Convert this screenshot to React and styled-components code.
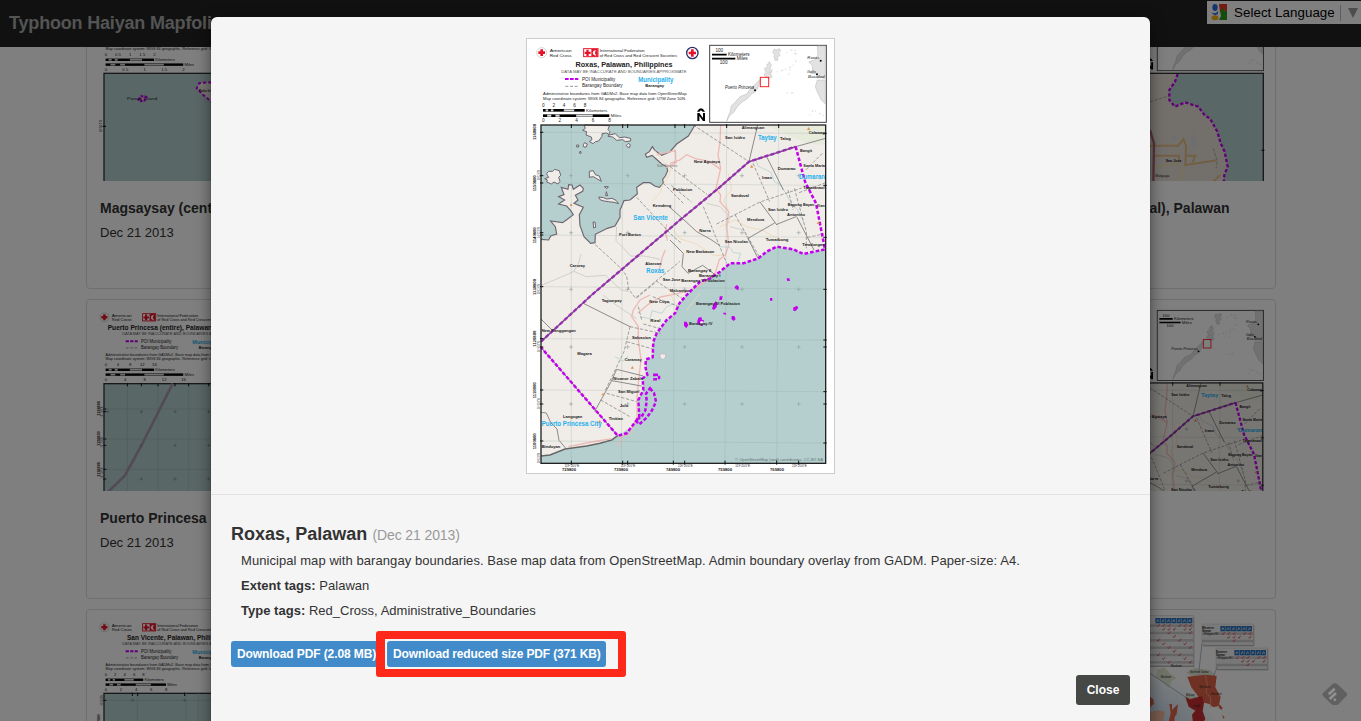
import React from "react";
import styled, { createGlobalStyle } from "styled-components";

const GlobalStyle = createGlobalStyle`
  * { box-sizing: border-box; }
  html, body { margin: 0; height: 721px; overflow: hidden; }
  body {
    background: #fff;
    color: #333;
    font: 13px/20px "Liberation Sans", Arial, sans-serif;
  }
`;

/* ---------- page ---------- */

const Page = styled.div`
  position: relative;
  height: 721px;
  overflow: hidden;
`;

const Navbar = styled.header`
  position: relative;
  z-index: 1;
  height: 47px;
  padding: 1px 0 0 9px;
  background: #222;
  display: flex;
  justify-content: space-between;
  align-items: flex-start;
`;

const Brand = styled.span`
  font-size: 18px;
  line-height: 44px;
  font-weight: bold;
  color: #a8a8a8;
  letter-spacing: -0.18px;
`;

const Translate = styled.div`
  width: 154px;
  height: 23px;
  padding-left: 3px;
  background: #fff;
  display: flex;
  align-items: center;
  color: #000;
  white-space: nowrap;
`;

const TranslateText = styled.span`
  margin-left: 5px;
  padding-right: 5px;
  border-right: 1px solid #bbb;
  font-size: 13.33px;
  line-height: 16px;
  letter-spacing: 0.05px;
`;

const Arrow = styled.svg`
  margin-left: 7px;
`;

const Gallery = styled.main`
  width: 1190px;
  margin: -58px 0 0 86px;
  display: flex;
  flex-direction: column;
  gap: 10px;
`;

const Row = styled.div`
  display: flex;
  justify-content: space-between;
`;

const Card = styled.article`
  width: 290px;
  height: 300px;
  padding: 4px;
  border: 1px solid #ddd;
  border-radius: 4px;
  background: #fff;
`;

const Thumb = styled.svg`
  display: block;
  width: 280px;
  height: 187px;
`;

const Caption = styled.div`
  padding: 17px 0 0 9px;
  white-space: nowrap;
`;

const CardTitle = styled.h3`
  margin: 0 0 5px;
  font-size: 14px;
  line-height: 20px;
`;

const CardDate = styled.p`
  margin: 0;
`;

const Backdrop = styled.div`
  position: absolute;
  inset: 0;
  z-index: 2;
  background: rgba(0, 0, 0, 0.5);
`;

const FeedBadge = styled.svg`
  position: absolute;
  right: 13px;
  bottom: 16px;
  z-index: 3;
`;

/* ---------- dialog ---------- */

const Dialog = styled.section`
  position: absolute;
  z-index: 3;
  top: 17px;
  left: 211px;
  width: 939px;
  height: 760px;
  border-radius: 6px;
  background: #f5f5f5;
  box-shadow: 0 5px 15px rgba(0, 0, 0, 0.5), 0 0 1px rgba(0, 0, 0, 0.6);
`;

const Preview = styled.div`
  height: 478px;
  padding-top: 20.5px;
  border-bottom: 1px solid #e2e2e2;
  display: flex;
  justify-content: center;
  align-items: flex-start;
`;

const MapImage = styled.svg`
  width: 309px;
  height: 436px;
  border: 1px solid #ccc;
  background: #fff;
`;

const Details = styled.div`
  padding: 28px 20px 0;
`;

const Heading = styled.h2`
  margin: 0 0 5px;
  font-size: 18px;
  line-height: 22px;
  letter-spacing: 0.02px;
`;

const HeadingDate = styled.small`
  font-size: 14px;
  font-weight: normal;
  letter-spacing: -0.1px;
  color: #999;
`;

const Line = styled.p`
  margin: 0 0 5px 10px;
  letter-spacing: ${(p) => p.$track || "0.02px"};
`;

const Actions = styled.div`
  position: relative;
  display: flex;
  gap: 5px;
  margin-top: 20px;
`;

const Button = styled.button`
  width: ${(p) => p.$width}px;
  height: ${(p) => p.$height || 26}px;
  padding: 0 6px;
  border: 0;
  border-radius: 3px;
  background: ${(p) => (p.$dark ? "#464846" : "#428bca")};
  color: #fff;
  font: bold 12px/18px "Liberation Sans", Arial, sans-serif;
  letter-spacing: ${(p) => p.$track || "0"};
  text-align: ${(p) => (p.$dark ? "center" : "left")};
  white-space: nowrap;
`;

const Highlight = styled.div`
  position: absolute;
  left: 145px;
  top: -10px;
  width: 250px;
  height: 46px;
  border: 8px solid #ff291b;
  border-left-width: 9px;
  border-right-width: 8px;
  border-radius: 3px;
`;

const Footer = styled.footer`
  display: flex;
  justify-content: flex-end;
  padding: 8px 20px 0;
`;

/* ---------- map drawing helpers ---------- */

const SEA = "#b5cfce";
const LAND = "#f0ece7";
const PURPLE = "#c400f0";
const CYAN = "#1fb0ee";

const MapText = styled.text`
  font-family: "Liberation Sans", Arial, sans-serif;
`;

function T({ x, y, s = 12, w, b, fill = "#222", mid, italic, rotate, children }) {
  return (
    <MapText
      x={x}
      y={y}
      fontSize={s}
      fontWeight={b ? "bold" : "normal"}
      fontStyle={italic ? "italic" : "normal"}
      fill={fill}
      textAnchor={mid ? "middle" : "start"}
      textLength={w}
      lengthAdjust="spacingAndGlyphs"
      transform={rotate ? `rotate(${rotate} ${x} ${y})` : undefined}
    >
      {children}
    </MapText>
  );
}

function ScaleBar({ x, y, w, unit, unitWidth }) {
  const q = w / 4;
  return (
    <g>
      <rect x={x} y={y} width={w} height="8" fill="#000" />
      <rect x={x + q / 4} y={y + 1} width={q / 4} height="6" fill="#ddd" />
      <rect x={x + q * 0.75} y={y + 1} width={q / 4} height="6" fill="#ddd" />
      <rect x={x + 2 * q} y={y + 1} width={q} height="6" fill="#ddd" />
      <T x={x + w + 4} y={y + 9} s={13} w={unitWidth}>{unit}</T>
    </g>
  );
}

function Header({ title, titleWidth, ticks = [0, 2, 4, 6, 8], km = 125, miles = 199, box = [733, 156], place = true }) {
  return (
    <g>
      <circle cx="65" cy="68" r="15" fill="#fff" stroke="#aaa" strokeWidth="1.5" />
      <path d="M61 58h8v6h6v8h-6v6h-8v-6h-6v-8h6z" fill="#e8132b" />
      <T x={89} y={67} s={13} w={66}>American</T>
      <T x={89} y={80} s={13} w={66}>Red Cross</T>
      <rect x="191" y="56" width="43" height="24" fill="#fff" stroke="#e8132b" strokeWidth="3" />
      <path d="M199 59h7v6h6v7h-6v6h-7v-6h-5v-7h5z" fill="#e8132b" />
      <path d="M214 57h19v22h-19z" fill="#e8132b" />
      <path d="M229 61a8 8 0 1 0 0 15a9 9 0 0 1 0-15z" fill="#fff" />
      <T x={239} y={66} s={13} w={135}>International Federation</T>
      <T x={239} y={80} s={13} w={232}>of Red Cross and Red Crescent Societies</T>
      <circle cx="517" cy="69" r="17" fill="#fff" stroke="#28306c" strokeWidth="4" />
      <path d="M513 58h8v7h7v8h-7v7h-8v-7h-7v-8h7z" fill="#e8132b" />
      <T x={312} y={110} s={23} w={titleWidth} b mid>{title}</T>
      <T x={124} y={128} s={12} w={376} fill="#555">DATA MAY BE INACCURATE AND BOUNDARIES APPROXIMATE</T>
      <path d="M135 147h40" stroke={PURPLE} strokeWidth="6" strokeDasharray="11 4" />
      <T x={186} y={152} s={15} w={100}>POI Municipality</T>
      <T x={355} y={155} s={20} w={105} b fill={CYAN}>Municipality</T>
      <path d="M136 169h38" stroke="#666" strokeWidth="2" strokeDasharray="9 5" />
      <T x={186} y={172} s={15} w={122}>Barangay Boundary</T>
      <T x={376} y={172} s={13} w={56} b>Barangay</T>
      <T x={69} y={194} s={13} w={434}>Administrative boundaries from GADMv2. Base map data from OpenStreetMap.</T>
      <T x={69} y={209} s={13} w={429}>Map coordinate system: WGS 84 geographic. Reference grid: UTM Zone 50N.</T>
      {ticks.map((t, i) => (
        <g key={i}>
          <T x={70 + (km / 4) * i} y={230} s={14} mid>{t}</T>
          <T x={70 + (miles / 4) * i} y={277} s={14} mid>{t}</T>
        </g>
      ))}
      <ScaleBar x={69} y={237} w={km} unit="Kilometers" unitWidth={64} />
      <ScaleBar x={69} y={253} w={miles} unit="Miles" unitWidth={32} />
      <path d="M531 245q12-20 24 0l-7 0-5-4-5 4z" fill="#000" />
      <path d="M532 249h6l11 15v-15h6v24h-6l-11-15v15h-6z" fill="#000" />
      <rect x="569" y="46" width="350" height="231" fill="#fff" stroke="#444" strokeWidth="3" />
      <g fill="#e2e2e2" stroke="#b4b4b4" strokeWidth="1.5">
        <path d="M722 146l-6 22-8 16-14 8-12 14-16 10-14 14-10 16-14 12-8 16 4-14 6-14 4-18 14-14 12-14 20-8 10-14 14-14z" />
        <path d="M748 95l6 10-4 10 6 8-4 8 4 10-8 4-8-2-8-8 6-8-4-10 8-8 2-8z" />
        <path d="M762 58l8 2 8-4 4 6-6 6 4 8-8 6 2 8-8 2-4-12 2-6-6-6z" />
        <path d="M892 48l24 0v98l-14-4-10 2-2-12-18-2 6-10-2-14-10-10 10-4 8-2 10-16zM892 150l24 0v72l-12-12-12-24-6-16z" />
      </g>
      <g fill="none" stroke="#c4c4c4" strokeWidth="2" strokeDasharray="4 9 7 6">
        <path d="M770 126l28-8 22-12 12-20M800 68l12-8 18 2-8 12 14-4M760 116l-16 14M800 190l26-2M868 256l12-16 32 18M732 116l10-14M806 134l4-16" />
      </g>
      <path d="M576 74h44M576 86h70" stroke="#000" strokeWidth="5" />
      <T x={598} y={67} s={14} mid>100</T>
      <T x={624} y={78} s={14} w={65}>Kilometers</T>
      <T x={650} y={91} s={14} w={33}>Miles</T>
      <T x={611} y={101} s={14} mid>100</T>
      {place && <rect x={box[0] - 12} y={box[1] - 14} width="25" height="28" fill="none" stroke="#f22" strokeWidth="3" />}
      <T x={615} y={176} s={14} w={87} italic>Puerto Princesa</T>
      <circle cx="705" cy="181" r="3" />
      <T x={862} y={87} s={13} w={36} italic>Roxas</T>
      <circle cx="902" cy="92" r="3" />
      <T x={862} y={130} s={13} w={25} italic>Iloilo</T>
      <T x={864} y={144} s={13} w={50} italic>Bacolod</T>
      <circle cx="891" cy="133" r="3" />
    </g>
  );
}

const coast =
  "M525 15L505 48 470 72 450 95 425 106 405 92 397 80 388 95 376 103 380 112 396 106 412 120 425 132 440 140 443 152 436 168 428 178 430 190 418 202 404 198 390 188 370 188 350 202 352 222 330 240 312 242 300 270 300 292 285 318 262 325 226 343 225 368 212 370 192 350 180 316 178 284 190 262 162 250 174 240 166 226 188 214 190 205 180 195 160 208 156 195 146 194 144 208 124 202 132 224 116 230 134 240 116 252 140 258 152 272 160 284 142 298 128 308 92 303 106 320 110 342 92 348 86 360 63 358";

const southCoast =
  "L63 1008 90 1005 135 987 200 978 240 970 275 960 293 947 335 922 355 885 354 840 370 810 368 775 378 765 378 718 398 712 400 665 410 640 440 600 465 580 478 550 500 525 540 485 570 475 600 455 630 430 670 430 715 415 740 395 770 380 820 388 850 402 917 388V15z";

const labels = [
  ["San Vicente", 340, 299, 104, 1], ["Roxas", 379, 460, 54, 1], ["Taytay", 714, 61, 56, 1],
  ["Dumaran", 837, 177, 78, 1], ["Puerto Princesa City", 65, 919, 180, 1],
  ["San Vicente", 410, 141, 62, 2], ["Kemdeng", 398, 260, 56], ["Port Barton", 297, 347, 66],
  ["Caruray", 149, 442, 46], ["Abaroan", 376, 435, 48], ["San Jose", 428, 482, 54],
  ["Malcampo", 450, 516, 58], ["Poblacion", 459, 212, 58], ["New Agutaya", 522, 130, 78],
  ["San Isidro", 615, 57, 60], ["Alimanguan", 665, 28, 68], ["Talog", 780, 61, 32],
  ["Calawag", 866, 42, 48], ["Bangit", 840, 96, 36], ["Santa Maria", 850, 141, 65],
  ["Dumarao", 773, 151, 54], ["Iraan", 726, 176, 30], ["Tagatanaol", 850, 208, 64],
  ["Sandoval", 633, 230, 54], ["Bagong Bayan", 803, 257, 80], ["Ilian", 892, 260, 22],
  ["San Isidro", 744, 272, 60], ["Antonino", 801, 289, 54], ["Mendoza", 681, 304, 52],
  ["Narra", 538, 335, 34], ["San Nicolas", 614, 370, 70], ["Tumarbong", 737, 362, 68],
  ["Taradungan", 847, 377, 66], ["New Barbacan", 499, 398, 84], ["Barangay II", 504, 455, 70],
  ["Barangay I", 537, 471, 64], ["Barangay V Poblacion", 484, 487, 130],
  ["Tagumpay", 245, 545, 60], ["New Cuyo", 388, 548, 60], ["Rizal", 391, 605, 30],
  ["New Panggangan", 65, 637, 102], ["Salvacion", 336, 657, 57], ["Magara", 172, 706, 43],
  ["Caramay", 314, 722, 51], ["Nicanor Zabala", 280, 779, 89], ["San Miguel", 294, 818, 64],
  ["Jolo", 299, 861, 26], ["Langogan", 129, 893, 58], ["Tinitian", 266, 901, 43],
  ["Binduyan", 65, 983, 56], ["Barangay VI Poblacion", 528, 555, 132], ["Barangay IV", 507, 614, 70],
];

function RoxasMap() {
  return (
    <g>
      <g transform="translate(0 -270)">
        <Header title="Roxas, Palawan, Philippines" titleWidth={291} />
      </g>
      <rect x="63" y="15" width="854" height="1015" fill={SEA} />
      <path d={coast + southCoast} fill={LAND} />
      <path d="M740 17h175v60l-60-10-60-26z" fill="#e6ebdc" />
      <path d={coast} fill="none" stroke="#6d6670" strokeWidth="3.5" />
      <path d="M63 1008L90 1005 135 987 200 978 240 970 275 960 293 947" fill="none" stroke="#666" strokeWidth="4.5" />
      <g fill={LAND} stroke="#6d6670" strokeWidth="3">
        <path d="M192 15l4 10-8 6 12 4-2 10 16 6 2 8-8 6 12 6 6-6 10-2 10-14 0-8 14-2 8 6 18-4 12 12 16-2 18 4 0 8-16 2-8-6-18 2-12-10-14-2 6-14-6-6 4-12z" />
        <path d="M80 160l6-6 12 0 6-6 14 4 4 14-6 6 4 12-6 8-12-6-8 6-14-6 2-6-8-4 12-4-4-6z" />
        <path d="M208 154l12-2 6 12 12 4 6 16-14-8-10-6-12 2z" />
        <path d="M236 231l14 2 10 4 16-2 12 6 8 10-14-4-16-2-14-2-12-4z" />
        <path d="M259 215l4 12h-6zM219 306l6 0 2 16-6 2zM253 200h12l-4 6zM190 74l4-6 8 4-4 10-8-2zM170 75h6v6h-6zM179 95h4v5h-4zM319 76l6-6 6 4-2 8h-6z" />
      </g>
      <g fill="none" stroke="#eebab6" strokeWidth="4">
        <path d="M602 15l-2 50-6 40 8 40-14 60 14 20-2 20 26 30-6 40 6 60-10 30-18 14-12 40-30 26-40 24-44 12-50 10-40 24-28 24M450 130l30-10 20-16 26 12 42 8 34 24M390 525l-30 15-20 30-5 20 20 30 0 40 8 60-6 50-6 60 0 60-20 50-26 10-10 28M440 312l-4 24 6 26M436 390l-8 18-10 40M410 104l56-12 2 36-30 14M275 956l-60 10-70 14" />
      </g>
      <g fill="none" stroke="#efd9b4" strokeWidth="2.5">
        <path d="M404 92l28 34 20 24-12 30-14 16-4 20-24 26M625 160l10 50-24 30 14 30M600 320l45-20 40 22 40 8 60 32M460 330l20 26 50 16 50 34 30 0M450 520l20 40-10 30M540 520l-40 50" />
      </g>
      <g fill="none" stroke="#b7d3d3" strokeWidth="2.5">
        <path d="M708 120l6 18 16 8 22 10 12 30 18 8 14 24 20 36 16 14 20 40M600 380l30 2 10 16 22 2-10 30M360 590l30 6 6-24 30 8 14-20 24-10M285 710l25 14 14-16M290 960l30-30 40-10" />
      </g>
      <g fill="none" stroke="#c4c0ba" strokeWidth="2">
        <path d="M183 402l-8 30-14 22 38 16 58-4 46 44 20 4M63 496l40-16 60-26M290 320l-2 42 24 24 20 22 40 0 50 10M250 526l40 30 60 40M560 250l40 10 30 30-10 30M630 320l40 10 20 40" />
      </g>
      <g fill="none" stroke="#777" strokeWidth="2" strokeDasharray="10 5">
        <path d="M226 374l76 70 18 24 6 40 20 26 134-110M350 232l104 112 28 24M454 196l60 50M430 190l60 60M350 534l60-50 80 54M450 140l112 84M520 15l167 110M699 130l50 115M590 312l130-66 125-42M550 260l70 170M645 284l75 130M823 205l36 130 0 50M804 210l16 60M907 100l-50 50M917 188l-80 30M478 560l-80-30M370 612l55 15M330 620l92 20M320 665l80 22M330 620l-18 75-58 120M260 820l90 25M242 840l88 50M355 560l10 40M862 352l50-10" />
      </g>
      <g fill="none" stroke="#777" strokeWidth="2.5">
        <path d="M713 15l-26 110M827 80l90-25M740 110l50 100M720 246l50 68M768 314l60-24M684 355l80-46M684 355l30 60M830 290l52 100M450 262l50 45 30 28 40 22 30 20M190 550l140 70M290 748l80 20M275 782l90 16M290 748l-16 36-50 90M63 597l36 36M63 877l16 2 14 30 18 18 6 34 22 26M450 360l40 40-4 40 18 20 44-24 40 30" />
      </g>
      <g stroke="#879c9b" strokeWidth="1" opacity=".65">
        <path d="M154 15v1015M308 15l-4 1015M465 15l-5 1015M620 15l-5 1015M776 15l-6 1015M63 37l854 3M63 189l854 7M63 345l854 7M63 500l854 7M63 656l854 4M63 810l854 5M63 963l854 6" fill="none" />
      </g>
      <g stroke="#8ca09d" strokeWidth="1.7">
        {[153, 323, 494, 666, 836].flatMap((x) =>
          [167, 338, 508, 681, 852].map((y) => <path key={`${x}-${y}`} d={`M${x - 6} ${y}h12M${x} ${y - 6}v12`} />)
        )}
      </g>
      <path d="M63 665L215 525 480 300 595 205 687 125 827 80" fill="none" stroke="#76517f" strokeWidth="4.5" />
      <path d="M63 682L293 947" fill="none" stroke="#76517f" strokeWidth="3" />
      <path d="M63 665L215 525 480 300 595 205 687 125 827 80" fill="none" stroke="#9c2bb8" strokeWidth="7" strokeDasharray="12 7" />
      <g fill="none" stroke={PURPLE} strokeWidth="7.5" strokeDasharray="11 6">
        <path d="M827 80L855 185 888 250 915 388 850 402 820 388 770 380 740 395 715 415 670 430 630 430 600 455 570 475 540 485 500 525 478 550 465 580 440 600 410 640 400 665 398 712 378 718 376 740 382 765 368 775 370 810 355 840 358 890 335 920 320 940 293 947L63 682" />
        <path d="M390 805l12 14 6 26-12 26-16 22-22 20-12-12 18-10 12-20 4-28-2-22z" />
        <path d="M403 764h14v14h-14z" />
      </g>
      <g fill={PURPLE}>
        <path d="M643 501l8-6 6 6-2 10-8-4zM800 475l8 0 2 8-9-1zM750 534h7v8h-7zM819 563l12-6 4 6-8 10-7-1zM609 578l8 0 2 6-8-1zM635 588l8 0 4 9-6 6-7-6zM599 529l9 0-2 10-8 2zM580 554l6-10 6 4-2 14-8 8-6-4zM492 605l8 0 5 10-6 10-7-8zM535 593l9-2 2 8 6 2-5 16-10-2-6-8z" />
      </g>
      <circle cx="545" cy="608" r="5" fill="#eee" />
      <path d="M420 706l4-5 14 2-2 10-8 6-8-8z" fill={LAND} stroke="#c3a7c9" strokeWidth="2" />
      <g fill="#df9552">
        <path d="M149 258l4-8 5 8zM690 143l5-9 5 9zM861 30l5-9 5 9zM332 746l5-8 5 8zM244 826l5-8 5 8zM890 312l5-8 5 8zM234 908l5-8 5 8z" />
      </g>
      {labels.map(([text, x, y, w, kind]) => (
        <T key={text + x} x={x} y={y} w={w} s={kind === 1 ? 20 : 13} b={kind !== 2} fill={kind === 1 ? CYAN : kind === 2 ? "#777" : "#1a1a1a"}>
          {text}
        </T>
      ))}
      <T x={645} y={1022} s={13} w={264} fill="#5f7272">© OpenStreetMap (and) contributors, CC-BY-SA</T>
      <rect x="63" y="15" width="854" height="1015" fill="none" stroke="#222" strokeWidth="4" />
      <path d="M154 12v12M308 12v12M323 12v12M465 12v12M494 12v12M620 12v12M776 12v12M154 1022v12M308 1022v12M323 1022v12M460 1022v12M494 1022v12M615 1022v12M770 1022v12M836 1022v12M60 37h10M60 167h10M60 189h10M60 338h10M60 345h10M60 500h10M60 656h10M60 681h10M60 810h10M60 852h10M60 963h10M910 40h10M910 196h10M910 352h10M910 508h10M910 660h10M910 681h10M910 815h10M910 852h10M910 969h10" stroke="#111" strokeWidth="3" />
      {[[60, 1160800], [214, 1150800], [370, 1140800], [525, 1130800], [680, 1120800], [835, 1110800], [988, 1100800]].map(([y, n]) => (
        <T key={n} x={49} y={y} s={13} w={48} b rotate={-90}>{n}</T>
      ))}
      {[181, 353, 523, 696, 867, 1030].map((y) => (
        <T key={y} x={59} y={y} s={10} w={32} rotate={-90}>10°15'0"N</T>
      ))}
      {[[126, 729800], [282, 739800], [438, 749800], [594, 759800], [750, 769800]].map(([x, n], i) => (
        <g key={n}>
          <T x={x} y={1053} s={13} w={42} b>{n}</T>
          <T x={[134, 302, 474, 646, 816][i]} y={1042} s={10} w={44}>119°20'0"E</T>
        </g>
      ))}
    </g>
  );
}

function MagsaysayThumb() {
  return (
    <Thumb viewBox="273 -18 840 561">
      <g transform="translate(254 -40) scale(.91)">
        <Header title="Magsaysay (central), Palawan" titleWidth={320} ticks={[0, 0.5, 1, 1.5, 2]} km={160} miles={256} />
      </g>
      <rect x="312" y="220" width="775" height="400" fill={SEA} stroke="#333" strokeWidth="4" />
      <path d="M640 310l-30-25-20-20 8-16 30-2 40 6" fill={LAND} stroke={PURPLE} strokeWidth="6" strokeDasharray="10 6" />
      <path d="M416 299l8-10 14 2-4 10-10 2z" fill={LAND} stroke={PURPLE} strokeWidth="7" strokeDasharray="8 3" />
      <T x={381} y={300} s={10} w={90}>Panag Island</T>
      <T x={596} y={275} s={11} b>Pulo Island</T>
      <path d="M308 379h10" stroke="#000" strokeWidth="3" />
      <T x={306} y={397} s={10} w={38} rotate={-90}>10°50'0"N</T>
    </Thumb>
  );
}

function PrincesaThumb() {
  return (
    <Thumb viewBox="273 42 840 561">
      <g transform="translate(254 20) scale(.91)">
        <Header title="Puerto Princesa (entire), Palawan, Philippines" titleWidth={472} ticks={[0, 4, 8, 12, 16]} km={160} miles={256} />
      </g>
      <rect x="312" y="281" width="775" height="400" fill={SEA} stroke="#333" strokeWidth="4" />
      <path d="M382 281v330M474 281v330M566 281v330M312 357h400M312 447h400M312 538h400" stroke="#9db6b5" strokeWidth="2" />
      <path d="M518 281L425 465 375 556 325 605" fill="none" stroke="#a596aa" strokeWidth="8" />
      <path d="M318 365h10m-5-5v10M419 365h10m-5-5v10M520 365h10m-5-5v10M621 365h10m-5-5v10M419 466h10m-5-5v10M520 466h10m-5-5v10M621 466h10m-5-5v10M419 567h10m-5-5v10M520 567h10m-5-5v10M621 567h10m-5-5v10" stroke="#829795" strokeWidth="2.5" />
      <path d="M382 279v10M424 279v10M474 279v10M525 279v10M566 279v10M626 279v10M310 357h9M310 365h9M310 447h9M310 466h9M310 538h9M310 567h9" stroke="#111" strokeWidth="3" />
      {[[377, "1138800"], [468, "1128800"], [560, "1118800"]].map(([y, n]) => (
        <g key={n}>
          <T x={299} y={y} s={12} w={44} b rotate={-90}>{n}</T>
          <T x={308} y={y + 6} s={10} w={34} rotate={-90}>10°15'0"N</T>
        </g>
      ))}
    </Thumb>
  );
}

function SanVicenteThumb() {
  return (
    <Thumb viewBox="273 972 840 561">
      <g transform="translate(254 950) scale(.91)">
        <Header title="San Vicente, Palawan, Philippines" titleWidth={345} km={124} miles={199} />
      </g>
      <rect x="312" y="1210" width="775" height="400" fill={SEA} stroke="#333" strokeWidth="4" />
      <path d="M412 1210v100M558 1210v100M595 1210v100M312 1231h400" stroke="#9db6b5" strokeWidth="2" />
      <path d="M392 1231h12m-6-5v10M548 1231h12m-6-5v10" stroke="#829795" strokeWidth="2.5" />
      <path d="M397 1208v10M413 1208v10M554 1208v10M310 1231h9" stroke="#111" strokeWidth="3" />
      <T x={308} y={1248} s={10} w={34} rotate={-90}>10°45'0"N</T>
      <T x={299} y={1305} s={12} w={32} b rotate={-90}>1170800</T>
    </Thumb>
  );
}

function PrincesaCityThumb() {
  return (
    <Thumb viewBox="-417 -18 840 561">
      <g transform="translate(-436 -40) scale(.91)">
        <Header title="Puerto Princesa (central), Palawan" titleWidth={380} place={false} />
      </g>
      <rect x="-378" y="220" width="778" height="400" fill={SEA} />
      <path d="M-378 220H143L135 245 118 270 118 300 135 320 165 307 205 320 225 347 240 355 262 395 272 430 284 455 293 500 283 525 276 620H-378z" fill="#e6e0d8" />
      <path d="M250 445l12 40-4 20M60 305l60-18" fill="none" stroke="#888" strokeWidth="2" strokeDasharray="9 5" />
      <path d="M60 437h85l15-20 8 20-2 58 94-14M75 467h72v20M166 467h30l-8 20M250 545l20-20" fill="none" stroke="#e5bd85" strokeWidth="6" />
      <path d="M60 390l12 40-2 115" fill="none" stroke="#b06a78" strokeWidth="7" />
      <path d="M162 500l-16 44M80 500l70-10" fill="none" stroke="#eee4a0" strokeWidth="4" />
      <path d="M190 380l14 60-24 0zM125 400l20 20-20 2z" fill="#dcdce0" />
      <path d="M143 222L135 245 118 270 118 300 135 320 165 307 205 320 225 347 240 355 262 395 272 430 284 455 293 500 283 525 276 620" fill="none" stroke={PURPLE} strokeWidth="7" strokeDasharray="10 6" />
      <T x={107} y={487} s={12} w={48} b>San Jose</T>
      <T x={76} y={532} s={9} w={42}>Matiyaga</T>
      <rect x="-378" y="220" width="778" height="400" fill="none" stroke="#333" strokeWidth="4" />
      <path d="M395 451h8" stroke="#111" strokeWidth="4" />
    </Thumb>
  );
}

function Table({ x, y, w, rows, cols, title, left = 0 }) {
  const top = title ? y - 6 : y - 8;
  return (
    <g>
      <rect x={x + 3} y={top + 4} width={w} height={30 + rows * 11} fill="#bbb" />
      <rect x={x} y={top} width={w} height={30 + rows * 11} fill="#f4f4f4" stroke="#ccc" strokeWidth="1.5" />
      {Array.from({ length: rows }, (_, r) => (
        <g key={r}>
          <rect x={x} y={y + 19 + r * 11} width={w} height="8" fill={r % 2 ? "#eee" : "#cbcbcb"} />
          {Array.from({ length: cols }, (_, c) =>
            (r * 3 + c * 5) % 4 < (r < 2 ? 3 : 1) ? (
              <path key={c} d={`M${x + left + 5 + c * 16} ${y + 22 + r * 11}l3 4 5-8`} fill="none" stroke="#e34b55" strokeWidth="2.5" />
            ) : null
          )}
        </g>
      ))}
      {Array.from({ length: cols }, (_, c) => (
        <g key={c}>
          <rect x={x + left + c * 16} y={y} width="15" height="16" fill="#2f75bd" />
          <path d={`M${x + left + c * 16 + 4} ${y + 12}l4-7 3 6`} fill="none" stroke="#fff" strokeWidth="2" />
        </g>
      ))}
      {title && (
        <>
          <T x={x} y={y + 8} s={9} b>{title}</T>
          <T x={x} y={y + 17} s={9} b>Samar</T>
          <T x={x + 6} y={y + 27} s={8} w={44}>Philippine RC</T>
        </>
      )}
    </g>
  );
}

function ResponseThumb() {
  return (
    <Thumb viewBox="-417 942 840 561">
      <defs>
        <radialGradient id="water" cx="30%" cy="72%" r="62%">
          <stop offset="0" stopColor="#a9c8e4" />
          <stop offset=".6" stopColor="#c2d7e9" />
          <stop offset="1" stopColor="#fff" />
        </radialGradient>
      </defs>
      <rect x="-417" y="942" width="840" height="561" fill="#fff" />
      <rect x="-300" y="1040" width="650" height="463" fill="url(#water)" />
      <g fill="#e1e6d0">
        <path d="M82 1110l20-8 20 20 18 12-16 10-8 20-20-20-18-12zM168 1118l26-14 46 6 18 18-40 6-30-6zM165 1190l25-8 12 12-8 20-26-8z" />
      </g>
      <g fill="#df6247">
        <path d="M172 1130l54-6 34 4-4 34 16 30-6 26-16 4-12-10-24-6-12-20-18-24zM268 1212l10 12-4 6-8-8zM276 1244l8 8-4 4z" />
        <path d="M60 1190l10 8 2 14-12 10zM118 1212l8 0 0 18 18-18-4 30-6 8-2 30h-20l10-40z" />
      </g>
      <path d="M166 1190l14 8 36-10 6 20-4 26 8 22-10 20H190l-4-32 10-12-20-12z" fill="#c62f32" />
      <path d="M60 1240q20-16 44-4l-8 44H60z" fill="#efb59b" />
      <path d="M226 1124l6 30-4 24 14 16 0 30" fill="none" stroke="#f0b5a1" strokeWidth="2" />
      <Table x={-20} y={954} w={210} left={96} rows={11} cols={7} />
      <Table x={216} y={978} w={154} left={55} rows={3} cols={6} title="Western" />
      <Table x={258} y={1050} w={154} left={55} rows={3} cols={6} title="Eastern" />
      <g fill="none" stroke="#789bb7" strokeWidth="2">
        <path d="M216 1030l-10 90M262 1100l-12 30M60 1120l110 74" />
      </g>
      <T x={180} y={1120} s={9} w={56}>Northern Samar</T>
      <T x={122} y={1101} s={9} w={34}>Masbate</T>
      <T x={92} y={1134} s={9} w={32}>Masbate</T>
      <T x={208} y={1163} s={9}>Western</T>
      <T x={244} y={1184} s={9}>Eastern</T>
      <T x={168} y={1188} s={9}>Biliran</T>
      <T x={190} y={1222} s={9}>Leyte</T>
    </Thumb>
  );
}

function MapCard({ thumb, title, date }) {
  return (
    <Card>
      {thumb}
      {title && (
        <Caption>
          <CardTitle>{title}</CardTitle>
          <CardDate>{date}</CardDate>
        </Caption>
      )}
    </Card>
  );
}

export default function App() {
  return (
    <Page>
      <GlobalStyle />
      <Navbar>
        <Brand>Typhoon Haiyan Mapfolio</Brand>
        <Translate>
          <svg width="19" height="19" viewBox="0 0 19 19">
            <rect width="19" height="19" fill="#fff" />
            <path d="M9 1h8v8l-4-2-3 2z" fill="#e63524" />
            <path d="M10 8l4-3v3h3v9h-8l2-4z" fill="#29961f" />
            <ellipse cx="5" cy="4.5" rx="2.6" ry="3.4" fill="#2868d8" />
            <path d="M1 9q4 3 7-1v3q-4 3-7-2z" fill="#3473dc" />
            <ellipse cx="5" cy="14.8" rx="3.6" ry="2.5" fill="#f2b218" />
          </svg>
          <TranslateText>Select Language</TranslateText>
          <Arrow width="10" height="10" viewBox="0 0 10 10">
            <path d="M0 0h10L5 10z" fill="#9b9b9b" />
          </Arrow>
        </Translate>
      </Navbar>
      <Gallery>
        <Row>
          <MapCard thumb={<MagsaysayThumb />} title="Magsaysay (central), Palawan" date="Dec 21 2013" />
          <MapCard thumb={<PrincesaCityThumb />} title="Puerto Princesa (central), Palawan" date="Dec 21 2013" />
        </Row>
        <Row>
          <MapCard thumb={<PrincesaThumb />} title="Puerto Princesa (entire), Palawan" date="Dec 21 2013" />
          <MapCard
            thumb={<Thumb viewBox="21 -245 923 616" preserveAspectRatio="none"><RoxasMap /></Thumb>}
            title="Roxas, Palawan"
            date="Dec 21 2013"
          />
        </Row>
        <Row>
          <MapCard thumb={<SanVicenteThumb />} />
          <MapCard thumb={<ResponseThumb />} />
        </Row>
      </Gallery>
      <Backdrop />
      <FeedBadge width="26" height="22" viewBox="0 0 78 66">
        <path d="M32 3q7-5 14 0l27 26q5 5 0 10L49 64q-2 2-5 2H34q-3 0-5-2L4 40q-5-5 0-11z" fill="#606060" />
        <path d="M20 34L38 17M23 48L42 30M36 53l5-5" stroke="#909090" strokeWidth="8" fill="none" />
      </FeedBadge>
      <Dialog>
        <Preview>
          <MapImage viewBox="21 -243 921 1302" preserveAspectRatio="none">
            <RoxasMap />
          </MapImage>
        </Preview>
        <Details>
          <Heading>
            Roxas, Palawan <HeadingDate>(Dec 21 2013)</HeadingDate>
          </Heading>
          <Line $track="0.07px">
            Municipal map with barangay boundaries. Base map data from OpenStreetMap. Admin boundary overlay from GADM. Paper-size: A4.
          </Line>
          <Line><b>Extent tags:</b> Palawan</Line>
          <Line><b>Type tags:</b> Red_Cross, Administrative_Boundaries</Line>
          <Actions>
            <Button $width={151} $track="-0.1px">Download PDF (2.08 MB)</Button>
            <Button $width={219} $track="-0.15px">Download reduced size PDF (371 KB)</Button>
            <Highlight />
          </Actions>
        </Details>
        <Footer>
          <Button $dark $width={54} $height={30}>Close</Button>
        </Footer>
      </Dialog>
    </Page>
  );
}
